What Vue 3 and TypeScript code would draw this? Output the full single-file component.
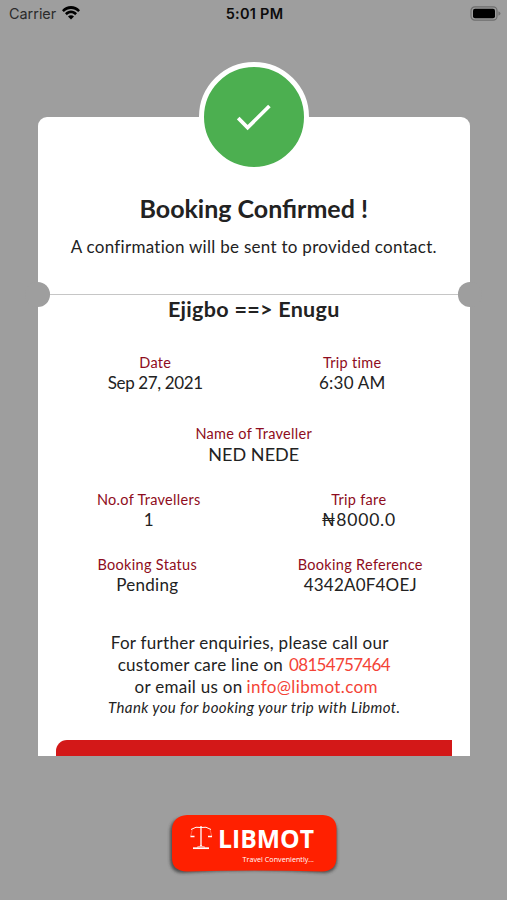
<script setup lang="ts">
interface Detail {
  label: string
  value: string
  kind: string
}

const rows: { name: string; cells: Detail[] }[] = [
  {
    name: 'schedule',
    cells: [
      { label: 'Date', value: 'Sep 27, 2021', kind: 'date' },
      { label: 'Trip time', value: '6:30 AM', kind: 'time' },
    ],
  },
  {
    name: 'traveller',
    cells: [{ label: 'Name of Traveller', value: 'NED NEDE', kind: 'name' }],
  },
  {
    name: 'cost',
    cells: [
      { label: 'No.of Travellers', value: '1', kind: 'count' },
      { label: 'Trip fare', value: '₦8000.0', kind: 'fare' },
    ],
  },
  {
    name: 'booking',
    cells: [
      { label: 'Booking Status', value: 'Pending', kind: 'status' },
      { label: 'Booking Reference', value: '4342A0F4OEJ', kind: 'reference' },
    ],
  },
]
</script>

<template>
  <main class="screen">
    <header class="status-bar">
      <div class="carrier">
        <span>Carrier</span>
        <svg class="wifi" viewBox="0 0 18 14" aria-hidden="true">
          <path d="M0 4.2C5-1.4 13-1.4 18 4.2L16.2 6.1C12.2 1.9 5.8 1.9 1.8 6.1Z" />
          <path d="M3 7.3C6.4 3.7 11.6 3.7 15 7.3L13.1 9.2C10.6 6.7 7.4 6.7 4.9 9.2Z" />
          <path d="M6 10.4C7.7 8.8 10.3 8.8 12 10.4L9 13.6Z" />
        </svg>
      </div>
      <span class="clock">5:01 PM</span>
      <svg class="battery" viewBox="0 0 31 15" aria-hidden="true">
        <rect x="1" y=".9" width="26" height="13.2" rx="3.8" fill="none" stroke="#6d6d6d" stroke-width="1.2" />
        <rect x="3" y="2.8" width="22" height="9.4" rx="2" />
        <path d="M28.4 5.2Q30.5 6 30.5 7.5T28.4 9.8Z" fill="#727272" />
      </svg>
    </header>

    <section class="ticket">
      <div class="badge">
        <svg viewBox="0 0 34 28" aria-hidden="true">
          <path d="M1.2 15 10.6 24.6 32.4 3" fill="none" stroke="#fff" stroke-width="3.7" />
        </svg>
      </div>
      <h1>Booking Confirmed !</h1>
      <p class="subtitle">A confirmation will be sent to provided contact.</p>
      <div class="tear"></div>
      <h2>Ejigbo ==&gt; Enugu</h2>

      <div v-for="row in rows" :key="row.name" class="row" :class="row.name">
        <div v-for="cell in row.cells" :key="cell.label" class="cell" :class="cell.kind">
          <div class="label">{{ cell.label }}</div>
          <div class="value">{{ cell.value }}</div>
        </div>
      </div>

      <div class="contact">
        <p class="enquiry">For further enquiries, please call our</p>
        <p class="phone-line"><span>customer care line on</span><a class="phone">08154757464</a></p>
        <p class="mail-line"><span>or email us on</span><a class="mail">info@libmot.com</a></p>
      </div>
      <p class="thanks">Thank you for booking your trip with Libmot.</p>
      <div class="action"></div>
    </section>

    <footer class="brand">
      <svg class="plate" viewBox="0 0 180 72" aria-hidden="true">
        <defs>
          <filter id="plate-shadow" x="-10%" y="-20%" width="120%" height="150%">
            <feGaussianBlur stdDeviation="1.4" />
          </filter>
        </defs>
        <path d="M17 11H158Q172 12 172 25V53Q172 65 160 66Q90 61 18 66Q5 66 5 52V24Q6 12 17 11Z" fill="#3c3c3c" opacity=".8" filter="url(#plate-shadow)" />
        <path d="M22 8H158Q171.500 9 171.500 22V51Q171 64 157 64.500Q90 62.500 22 64.500Q7 64 7 51V22Q8 9 22 8Z" fill="#ff2000" />
        <g fill="none" stroke="#fff">
          <path d="M26 22.500Q31 19 36 20.500Q41 19 46 22.500" stroke-width="1" />
          <path d="M36 19V40" stroke-width="1.300" />
          <path d="M28 41.200H44" stroke-width="1.700" />
          <path d="M32 40.200Q35.500 39.600 36 38Q36.500 39.600 40 40.200" stroke-width=".7" />
          <path d="M25.500 29.500H29.500M43 29.500H47" stroke-width="1.300" />
          <path d="M27.300 22.500 25.700 29.300M45 22.500 46.800 29.300" stroke-width=".3" />
        </g>
      </svg>
      <div class="brand-text">
        <strong>LIBMOT</strong>
        <small>Travel Conveniently...</small>
      </div>
    </footer>
  </main>
</template>

<style>
body {
  margin: 0;
}
</style>

<style scoped>
.screen {
  box-sizing: border-box;
  width: 507px;
  height: 900px;
  overflow: hidden;
  background: #9e9e9e;
  color: #222;
  font-family: Lato, "Liberation Sans", sans-serif;
}

h1,
h2,
p {
  margin: 0;
}

.status-bar {
  display: grid;
  grid-template-columns: 1fr auto 1fr;
  align-items: center;
  box-sizing: border-box;
  height: 28px;
  padding: 0 7px 0 9px;
  font: 400 14.4px/28px Inter, sans-serif;
  color: #2b2b2b;
}

.carrier {
  display: flex;
  align-items: center;
  gap: 6px;
}

.wifi {
  width: 18px;
  height: 14px;
  margin-top: -2px;
  fill: #000;
}

.clock {
  font-weight: 600;
  font-size: 14.5px;
  letter-spacing: 0.25px;
  color: #0c0c0c;
}

.battery {
  justify-self: end;
  width: 31px;
  height: 15px;
  margin: -2px -1px 0 0;
}

.ticket {
  position: relative;
  box-sizing: border-box;
  width: 432.5px;
  height: 638.5px;
  margin: 89px 0 0 37.5px;
  padding-top: 75px;
  border-radius: 9px 9px 0 0;
  background: #fff;
  text-align: center;
}

.badge {
  position: absolute;
  top: -55px;
  left: 161.5px;
  display: flex;
  align-items: center;
  justify-content: center;
  box-sizing: border-box;
  width: 110px;
  height: 110px;
  border: 5px solid #fff;
  border-radius: 50%;
  background: #4caf50;
}

.badge svg {
  width: 34px;
  height: 28px;
}

h1 {
  font-size: 25px;
  font-weight: 700;
  line-height: 32px;
}

.subtitle {
  margin-top: 12px;
  font-size: 17px;
  line-height: 22px;
  letter-spacing: 0.28px;
}

.tear {
  position: relative;
  height: 1px;
  margin-top: 36px;
  background: #c6c6c6;
}

.tear::before,
.tear::after {
  content: "";
  position: absolute;
  top: -12px;
  width: 24.5px;
  height: 24.5px;
  border-radius: 50%;
  background: #9e9e9e;
}

.tear::before {
  left: -12.3px;
}

.tear::after {
  right: -12.3px;
}

h2 {
  font-size: 21.5px;
  font-weight: 700;
  line-height: 28px;
  letter-spacing: 0.3px;
}

.row {
  display: flex;
  justify-content: center;
}

.schedule {
  gap: 57px;
  margin-top: 31px;
}

.traveller {
  margin-top: 31px;
}

.cost {
  gap: 70px;
  margin-top: 26px;
}

.booking {
  gap: 73px;
  margin-top: 25px;
}

.cell {
  width: 140px;
}

.label {
  font-size: 14.5px;
  line-height: 18px;
  letter-spacing: 0.31px;
  color: #8e0c20;
}

.value {
  font-size: 17px;
  line-height: 22px;
}

.date .value {
  letter-spacing: -0.37px;
}

.time .value {
  letter-spacing: 0.25px;
}

.name .value {
  font-size: 18px;
  letter-spacing: 0.05px;
}

.fare .value {
  font-size: 17.5px;
  letter-spacing: 0.8px;
}

.status .value {
  letter-spacing: 0.3px;
}

.reference .value {
  letter-spacing: 0.2px;
}

.contact {
  margin-top: 36px;
  font-size: 17px;
  line-height: 22px;
  letter-spacing: 0.28px;
}

.enquiry {
  padding-right: 8px;
}

.phone-line,
.mail-line {
  display: flex;
  justify-content: center;
}

.phone-line {
  gap: 6px;
}

.mail-line {
  gap: 4px;
  padding-left: 5px;
}

.phone,
.mail {
  color: #f44336;
}

.phone {
  letter-spacing: -0.7px;
}

.mail {
  letter-spacing: 0.38px;
}

.thanks {
  padding-left: 1px;
  font-size: 15px;
  font-style: italic;
  line-height: 19px;
  letter-spacing: 0.39px;
}

.action {
  height: 15.5px;
  margin: 23px 18.5px 0;
  border-top-left-radius: 11px;
  background: #d31818;
}

.brand {
  position: relative;
  width: 180px;
  height: 72px;
  margin: 51.5px 0 0 165px;
}

.plate {
  display: block;
  width: 180px;
  height: 72px;
}

.brand-text {
  position: absolute;
  top: 16px;
  right: 31px;
  display: flex;
  flex-direction: column;
  align-items: flex-end;
  color: #fff;
  font-family: "Open Sans", sans-serif;
}

.brand-text strong {
  font-size: 24.7px;
  font-weight: 700;
  line-height: 32px;
}

.brand-text small {
  margin-top: -1px;
  font-size: 7.2px;
  line-height: 10px;
}
</style>
